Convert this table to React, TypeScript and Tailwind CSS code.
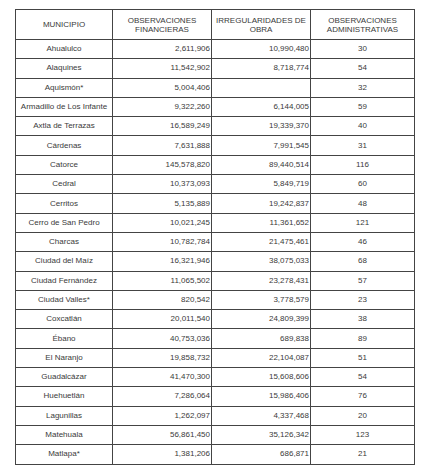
const rows: [string, string, string, string][] = [
  ["Ahualulco", "2,611,906", "10,990,480", "30"],
  ["Alaquines", "11,542,902", "8,718,774", "54"],
  ["Aquismón*", "5,004,406", "", "32"],
  ["Armadillo de Los Infante", "9,322,260", "6,144,005", "59"],
  ["Axtla de Terrazas", "16,589,249", "19,339,370", "40"],
  ["Cárdenas", "7,631,888", "7,991,545", "31"],
  ["Catorce", "145,578,820", "89,440,514", "116"],
  ["Cedral", "10,373,093", "5,849,719", "60"],
  ["Cerritos", "5,135,889", "19,242,837", "48"],
  ["Cerro de San Pedro", "10,021,245", "11,361,652", "121"],
  ["Charcas", "10,782,784", "21,475,461", "46"],
  ["Ciudad del Maíz", "16,321,946", "38,075,033", "68"],
  ["Ciudad Fernández", "11,065,502", "23,278,431", "57"],
  ["Ciudad Valles*", "820,542", "3,778,579", "23"],
  ["Coxcatlán", "20,011,540", "24,809,399", "38"],
  ["Ébano", "40,753,036", "689,838", "89"],
  ["El Naranjo", "19,858,732", "22,104,087", "51"],
  ["Guadalcázar", "41,470,300", "15,608,606", "54"],
  ["Huehuetlán", "7,286,064", "15,986,406", "76"],
  ["Lagunillas", "1,262,097", "4,337,468", "20"],
  ["Matehuala", "56,861,450", "35,126,342", "123"],
  ["Matlapa*", "1,381,206", "686,871", "21"],
];

export default function App() {
  return (
    <div className="w-[441px] h-[465px] bg-white overflow-hidden pt-[9px] pl-[15px] font-['Liberation_Sans',Arial,sans-serif] text-[8px] text-[#3a3a3a]">
      <table className="table-fixed border-collapse w-[399px]">
        <colgroup>
          <col className="w-[97px]" />
          <col className="w-[99px]" />
          <col className="w-[99px]" />
          <col className="w-[104px]" />
        </colgroup>
        <thead>
          <tr className="h-[30px]">
            <th className="border border-[#444] font-normal text-center leading-[9px] p-0 whitespace-nowrap">MUNICIPIO</th>
            <th className="border border-[#444] font-normal text-center leading-[9px] p-0 whitespace-nowrap">
              OBSERVACIONES
              <br />
              FINANCIERAS
            </th>
            <th className="border border-[#444] font-normal text-center leading-[9px] p-0 whitespace-nowrap">
              IRREGULARIDADES DE
              <br />
              OBRA
            </th>
            <th className="border border-[#444] font-normal text-center leading-[9px] p-0 whitespace-nowrap">
              OBSERVACIONES
              <br />
              ADMINISTRATIVAS
            </th>
          </tr>
        </thead>
        <tbody>
          {rows.map(([m, f, o, a]) => (
            <tr key={m} className="h-[19.3px]">
              <td className="border border-[#444] text-center p-0 leading-none whitespace-nowrap">{m}</td>
              <td className="border border-[#444] text-right p-0 pr-px leading-none">{f}</td>
              <td className="border border-[#444] text-right p-0 pr-px leading-none">{o}</td>
              <td className="border border-[#444] text-center p-0 leading-none">{a}</td>
            </tr>
          ))}
        </tbody>
      </table>
    </div>
  );
}
